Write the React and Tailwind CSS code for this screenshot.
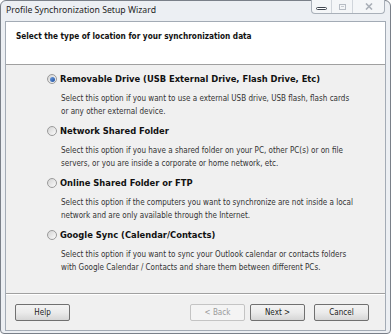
import React from "react";

const options = [
  {
    title: "Removable Drive (USB External Drive, Flash Drive, Etc)",
    desc: ["Select this option if you want to use a external USB drive, USB flash, flash cards", "or any other external device."],
    checked: true,
  },
  {
    title: "Network Shared Folder",
    desc: ["Select this option if you have a shared folder on your PC, other PC(s) or on file", "servers, or you are inside a corporate or home network, etc."],
  },
  {
    title: "Online Shared Folder or FTP",
    desc: ["Select this option if the computers you want to synchronize are not inside a local", "network and are only available through the Internet."],
  },
  {
    title: "Google Sync (Calendar/Contacts)",
    desc: ["Select this option if you want to sync your Outlook calendar or contacts folders", "with Google Calendar / Contacts and share them between different PCs."],
  },
];

function Radio({ checked }) {
  return (
    <span className="w-[10px] h-[10px] rounded-full border border-[#9a9a9a] bg-linear-to-br from-[#d4d4d4] to-[#fbfbfb] flex items-center justify-center shrink-0">
      {checked && <span className="w-[5px] h-[5px] rounded-full bg-linear-to-br from-[#6f9ee0] to-[#1d4f9e]" />}
    </span>
  );
}

function Btn({ children, disabled, w = "w-[55px]" }) {
  return (
    <div
      className={
        "h-[17px] rounded-[2px] border flex items-center justify-center text-[8px] " +
        w +
        (disabled
          ? " border-[#c4c4c4] text-[#9a9a9a] bg-[#f4f4f4]"
          : " border-[#707070] text-[#1a1a1a] bg-linear-to-b from-[#f3f3f3] via-[#ebebeb] to-[#d6d6d6]")
      }
    >
      {children}
    </div>
  );
}

export default function App() {
  return (
    <div className="w-[392px] h-[336px] bg-white font-['Tahoma','DejaVu_Sans_Condensed','DejaVu_Sans',sans-serif]">
      <div className="w-[391px] h-[334px] border border-[#7a8089] rounded-t-[6px] rounded-b-[4px] bg-[#eceff3] flex flex-col">
        {/* title bar */}
        <div className="h-[20px] flex items-start relative shrink-0">
          <div className="pl-[5px] pt-[3px] text-[8.7px] text-[#1e1e1e] font-['Noto_Sans','Open_Sans',sans-serif] leading-[12px]">
            Profile Synchronization Setup Wizard
          </div>
          <div className="absolute right-[5px] top-[-1px] h-[14px] w-[74px] flex border border-[#a9b0b9] border-t-0 rounded-b-[4px] bg-[#f4f6f8]">
            <div className="w-[20px] flex items-center justify-center border-r border-[#d0d5db]">
              <span className="w-[11px] h-[3px] rounded-[2px] border border-[#3f4650] bg-white mt-[3px]" />
            </div>
            <div className="w-[21px] flex items-center justify-center border-r border-[#d0d5db]">
              <span className="w-[7px] h-[6px] border border-[#b7bdc5] flex items-center justify-center">
                <span className="w-[3px] h-[1px] bg-[#c8ccd2]" />
              </span>
            </div>
            <div className="flex-1 flex items-center justify-center">
              <svg width="8" height="7" viewBox="0 0 8 7">
                <path d="M1 0.5 L7 6.5 M7 0.5 L1 6.5" stroke="#a9afb7" strokeWidth="1.6" />
              </svg>
            </div>
          </div>
        </div>
        {/* client */}
        <div className="mx-[4px] mb-[2px] flex-1 border border-[#a3abb5] flex flex-col bg-[#f0f0f0]">
          <div className="h-[43px] bg-white border-b border-[#a0a0a0] pl-[10px] pt-[9px] shrink-0">
            <div className="text-[8.2px] font-bold text-[#111] leading-[10px]">
              Select the type of location for your synchronization data
            </div>
          </div>
          <div className="flex-1 pl-[41px] pt-[7px] flex flex-col">
            {options.map((o, i) => (
              <div key={i} className="h-[52px] flex flex-col">
                <div className="h-[14px] flex items-center gap-[3px]">
                  <Radio checked={o.checked} />
                  <span className="text-[9.3px] font-bold text-[#111] leading-[12px]">{o.title}</span>
                </div>
                <div className="pl-[14px] mt-[6px] text-[8px] leading-[13px] text-[#333]">
                  {o.desc.map((d, j) => (
                    <div key={j}>{d}</div>
                  ))}
                </div>
              </div>
            ))}
          </div>
          <div className="h-[37px] border-t border-[#a0a0a0] shadow-[inset_0_1px_0_#ffffff] flex items-start pt-[10px] pl-[9px] pr-[16px] shrink-0">
            <Btn>Help</Btn>
            <div className="flex-1" />
            <Btn disabled>&lt; Back</Btn>
            <div className="w-[5px]" />
            <Btn>Next &gt;</Btn>
            <div className="w-[9px]" />
            <Btn>Cancel</Btn>
          </div>
        </div>
      </div>
    </div>
  );
}
